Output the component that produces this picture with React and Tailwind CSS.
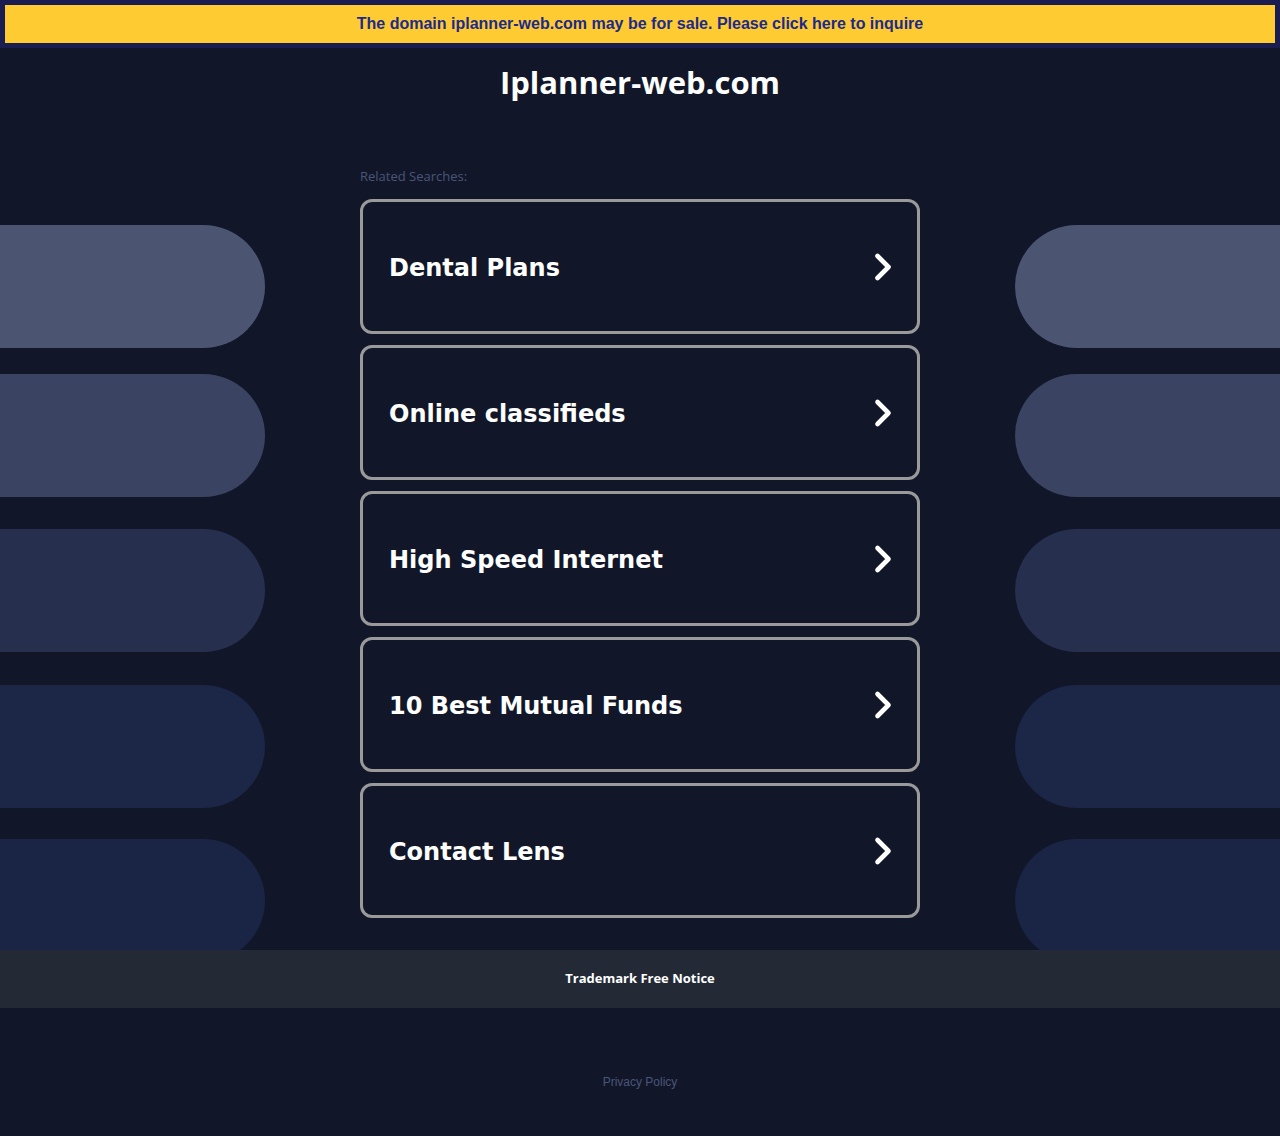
const searches = [
  'Dental Plans',
  'Online classifieds',
  'High Speed Internet',
  '10 Best Mutual Funds',
  'Contact Lens',
];

// decorative side pills behind the list
const pills = [
  { top: 'top-[177px]', color: 'bg-[#4b5572]' },
  { top: 'top-[326px]', color: 'bg-[#3a4462]' },
  { top: 'top-[481px]', color: 'bg-[#262f4e]' },
  { top: 'top-[637px]', color: 'bg-[#1c2646]' },
  { top: 'top-[791px]', color: 'bg-[#1a2545]' },
];

const Chevron = () => (
  <svg width="20" height="30" viewBox="0 0 20 30" fill="none" className="shrink-0">
    <polyline
      points="4.5,4 15.5,15 4.5,26"
      stroke="white"
      strokeWidth="4.6"
      strokeLinecap="round"
      strokeLinejoin="round"
    />
  </svg>
);

const App = () => {
  return (
    <div className="min-h-[1136px] bg-[#111729] font-['Open_Sans',sans-serif]">
      <div className="bg-[#1a1d52] p-[5px]">
        <a
          href="#"
          className="flex h-[38px] items-center justify-center bg-[#ffcb32] font-['Liberation_Sans',Arial,sans-serif] text-base font-bold text-[#1b2a8c]"
        >
          The domain iplanner-web.com may be for sale. Please click here to inquire
        </a>
      </div>

      <section className="relative overflow-hidden pb-8">
        {pills.map((p, i) => (
          <div key={`l${i}`}>
            <div className={`absolute left-0 h-[123px] w-[265px] rounded-r-full ${p.top} ${p.color}`} />
            <div className={`absolute right-0 h-[123px] w-[265px] rounded-l-full ${p.top} ${p.color}`} />
          </div>
        ))}

        <div className="relative">
          <h1 className="pt-[15px] text-center text-[31px] font-bold leading-[38px] text-white">
            Iplanner-web.com
          </h1>

          <div className="mx-auto mt-[67px] w-[560px]">
            <p className="mb-[15px] text-[13px] leading-[16px] text-[#4a5578]">Related Searches:</p>
            <div className="flex flex-col gap-[11px]">
              {searches.map((s) => (
                <a
                  key={s}
                  href="#"
                  className="flex h-[135px] items-center justify-between rounded-[12px] border-[3px] border-[#9a9a9a] bg-[#111729] pl-[26px] pr-[24px]"
                >
                  <span className="pt-[2px] font-['DejaVu_Sans',Verdana,sans-serif] text-[24px] font-bold text-white">
                    {s}
                  </span>
                  <Chevron />
                </a>
              ))}
            </div>
          </div>
        </div>
      </section>

      <footer className="flex h-[58px] items-center justify-center bg-[#232a35]">
        <span className="text-[13px] font-bold text-white">Trademark Free Notice</span>
      </footer>

      <div className="pt-[60px] text-center">
        <a href="#" className="font-['Liberation_Sans',Arial,sans-serif] text-[12px] text-[#4a5578]">
          Privacy Policy
        </a>
      </div>
    </div>
  );
};

export default App;
